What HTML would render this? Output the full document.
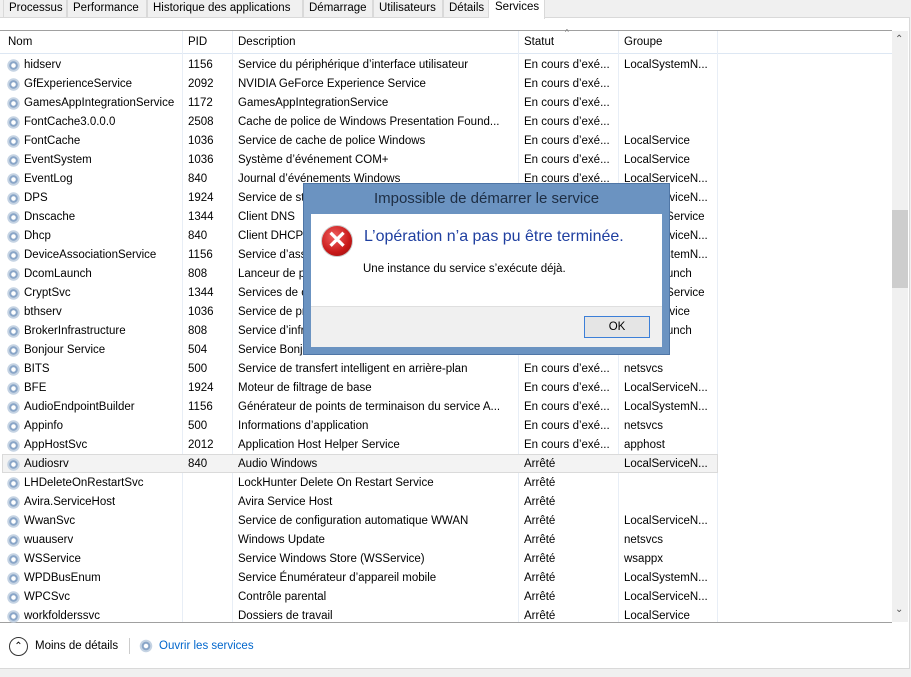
<!DOCTYPE html>
<html><head><meta charset="utf-8"><style>
*{margin:0;padding:0;box-sizing:border-box}
body{width:911px;height:677px;background:#f0f0f0;font-family:"Liberation Sans",sans-serif;font-size:11.5px;color:#000;position:relative;overflow:hidden}
.abs{position:absolute}
.tab{position:absolute;top:0;height:18px;border:1px solid #d9d9d9;border-top:none;background:#f0f0f0;padding:0 5px;line-height:16px;font-size:11.5px}
.main{position:absolute;left:0;top:17px;width:910px;height:652px;background:#fff;border-top:1px solid #d9d9d9;border-right:1px solid #d9d9d9;border-bottom:1px solid #d9d9d9}
.row{position:absolute;left:2px;width:716px;height:19px;line-height:19px;white-space:nowrap}
.row span{position:absolute;top:0;overflow:hidden}
.c1{left:22px}.c2{left:186px}.c3{left:236px;width:280px}.c4{left:522px;width:90px}.c5{left:622px;width:92px}
.ico{position:absolute;left:5px;top:3px;width:13px;height:13px;border-radius:50%;background:radial-gradient(circle,#fff 0 2px,#8aa6c8 2.5px 4px,#c5d3e3 4.5px 6px,transparent 6.5px)}
.vl{position:absolute;top:31px;width:1px;height:591px;background:#e8eef6}
</style></head><body>
<div class="main"></div>
<div class="tab" style="left:3px;width:64px">Processus</div>
<div class="tab" style="left:67px;width:80px">Performance</div>
<div class="tab" style="left:147px;width:156px">Historique des applications</div>
<div class="tab" style="left:303px;width:70px">Démarrage</div>
<div class="tab" style="left:373px;width:70px">Utilisateurs</div>
<div class="tab" style="left:443px;width:46px">Détails</div>
<div class="abs" style="left:489px;top:0;width:56px;height:19px;background:#fff;border-right:1px solid #d9d9d9;padding-left:6px;line-height:14px">Services</div>
<div class="abs" style="left:0;top:30px;width:892px;height:1px;background:#a0a0a0"></div>
<div class="abs" style="left:0;top:53px;width:892px;height:1px;background:#dde7f3"></div>
<div class="abs" style="left:8px;top:36px">Nom</div>
<div class="abs" style="left:188px;top:36px">PID</div>
<div class="abs" style="left:238px;top:36px">Description</div>
<div class="abs" style="left:524px;top:36px">Statut</div>
<div class="abs" style="left:565px;top:28px;font-size:8px;color:#777">^</div>
<div class="abs" style="left:624px;top:36px">Groupe</div>
<div class="vl" style="left:182px"></div><div class="vl" style="left:232px"></div><div class="vl" style="left:518px"></div><div class="vl" style="left:618px"></div><div class="vl" style="left:717px"></div>
<div class="abs" style="left:892px;top:31px;width:16px;height:591px;background:#f0f0f0"></div>
<div class="abs" style="left:892px;top:210px;width:16px;height:78px;background:#cdcdcd"></div>
<div class="abs" style="left:895px;top:34px;font-size:10px;color:#555">&#8963;</div>
<div class="abs" style="left:895px;top:604px;font-size:10px;color:#555">&#8964;</div>
<div class="abs" style="left:0;top:622px;width:892px;height:1px;background:#a0a0a0"></div>
<div class="abs" style="left:2px;top:454px;width:716px;height:19px;background:#f3f3f3;border:1px solid #dadada"></div>
<div id="rows"></div>
<script>
var d=[["hidserv","1156","Service du périphérique d’interface utilisateur","En cours d’exé...","LocalSystemN..."],
["GfExperienceService","2092","NVIDIA GeForce Experience Service","En cours d’exé...",""],
["GamesAppIntegrationService","1172","GamesAppIntegrationService","En cours d’exé...",""],
["FontCache3.0.0.0","2508","Cache de police de Windows Presentation Found...","En cours d’exé...",""],
["FontCache","1036","Service de cache de police Windows","En cours d’exé...","LocalService"],
["EventSystem","1036","Système d’événement COM+","En cours d’exé...","LocalService"],
["EventLog","840","Journal d’événements Windows","En cours d’exé...","LocalServiceN..."],
["DPS","1924","Service de stratégie de diagnostic","En cours d’exé...","LocalServiceN..."],
["Dnscache","1344","Client DNS","En cours d’exé...","NetworkService"],
["Dhcp","840","Client DHCP","En cours d’exé...","LocalServiceN..."],
["DeviceAssociationService","1156","Service d’association de périphériques","En cours d’exé...","LocalSystemN..."],
["DcomLaunch","808","Lanceur de processus serveur DCOM","En cours d’exé...","DcomLaunch"],
["CryptSvc","1344","Services de chiffrement","En cours d’exé...","NetworkService"],
["bthserv","1036","Service de prise en charge Bluetooth","En cours d’exé...","LocalService"],
["BrokerInfrastructure","808","Service d’infrastructure des tâches","En cours d’exé...","DcomLaunch"],
["Bonjour Service","504","Service Bonjour","En cours d’exé...",""],
["BITS","500","Service de transfert intelligent en arrière-plan","En cours d’exé...","netsvcs"],
["BFE","1924","Moteur de filtrage de base","En cours d’exé...","LocalServiceN..."],
["AudioEndpointBuilder","1156","Générateur de points de terminaison du service A...","En cours d’exé...","LocalSystemN..."],
["Appinfo","500","Informations d’application","En cours d’exé...","netsvcs"],
["AppHostSvc","2012","Application Host Helper Service","En cours d’exé...","apphost"],
["Audiosrv","840","Audio Windows","Arrêté","LocalServiceN..."],
["LHDeleteOnRestartSvc","","LockHunter Delete On Restart Service","Arrêté",""],
["Avira.ServiceHost","","Avira Service Host","Arrêté",""],
["WwanSvc","","Service de configuration automatique WWAN","Arrêté","LocalServiceN..."],
["wuauserv","","Windows Update","Arrêté","netsvcs"],
["WSService","","Service Windows Store (WSService)","Arrêté","wsappx"],
["WPDBusEnum","","Service Énumérateur d’appareil mobile","Arrêté","LocalSystemN..."],
["WPCSvc","","Contrôle parental","Arrêté","LocalServiceN..."],
["workfolderssvc","","Dossiers de travail","Arrêté","LocalService"]];
var h="";d.forEach(function(r,i){h+='<div class="row" style="top:'+(56+i*19)+'px"><i class="ico"></i><span class="c1">'+r[0]+'</span><span class="c2">'+r[1]+'</span><span class="c3">'+r[2]+'</span><span class="c4">'+r[3]+'</span><span class="c5">'+r[4]+'</span></div>'});
document.getElementById("rows").innerHTML=h;
</script>
<div class="abs" style="left:9px;top:637px;width:19px;height:19px;border:1.5px solid #333;border-radius:50%;text-align:center;font-size:10px;line-height:17px">&#8963;</div>
<div class="abs" style="left:35px;top:640px">Moins de détails</div>
<div class="abs" style="left:129px;top:638px;width:1px;height:16px;background:#ccc"></div>
<div class="abs" style="left:139px;top:639px;width:14px;height:14px;border-radius:50%;background:radial-gradient(circle,#fff 0 2px,#8aa6c8 2.5px 4px,#c5d3e3 4.5px 6px,transparent 6.5px)"></div>
<div class="abs" style="left:159px;top:640px;color:#0066cc">Ouvrir les services</div>
<div class="abs" style="left:303px;top:183px;width:367px;height:172px;background:#6b93c1;border:1px solid #4f76a6"></div>
<div class="abs" style="left:303px;top:190px;width:367px;text-align:center;font-size:15px;color:#1e2e44">Impossible de démarrer le service</div>
<div class="abs" style="left:311px;top:214px;width:351px;height:133px;background:#fff"></div>
<div class="abs" style="left:311px;top:306px;width:351px;height:41px;background:#f0f0f0;border-top:1px solid #dfdfdf"></div>
<div class="abs" style="left:321px;top:225px;width:32px;height:32px;border-radius:50%;background:radial-gradient(circle at 40% 35%,#f06060,#c81818 60%,#901010);border:1.5px solid #ccc;color:#fff;font-size:24px;font-weight:bold;text-align:center;line-height:29px">&#10005;</div>
<div class="abs" style="left:364px;top:228px;font-size:16px;color:#1f3fa0">L’opération n’a pas pu être terminée.</div>
<div class="abs" style="left:363px;top:263px;font-size:11.5px">Une instance du service s’exécute déjà.</div>
<div class="abs" style="left:584px;top:316px;width:66px;height:22px;background:#e5e5e5;border:1px solid #3c7fd8;text-align:center;line-height:20px">OK</div>
</body></html>
